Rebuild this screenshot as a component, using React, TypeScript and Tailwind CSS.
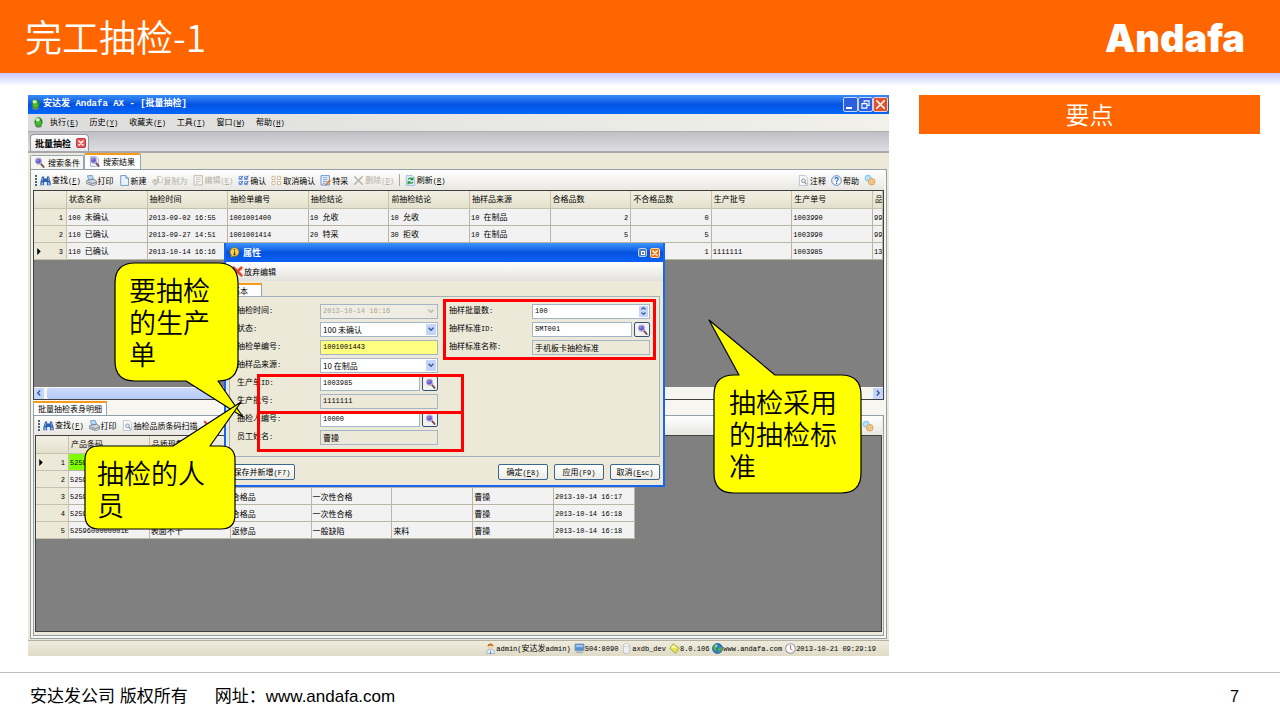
import React from "react";

type IconProps = { className?: string };

const ICON = "size-[11px] shrink-0";

/* Latin runs are set in a narrow monospace beside the Chinese text. */
function T({ children }: { children: string }) {
  const parts = children.match(/[\x20-\x7e]+|[^\x20-\x7e]+/g) ?? [];
  return (
    <span className="whitespace-pre">
      {parts.map((p, i) =>
        /^[\x20-\x7e]+$/.test(p) ? (
          <span key={i} className="font-['Liberation_Mono',monospace] text-[7px]">
            {p}
          </span>
        ) : (
          p
        )
      )}
    </span>
  );
}

function Key({ k }: { k: string }) {
  return (
    <span className="font-['Liberation_Mono',monospace] text-[7px]">
      (<u>{k}</u>)
    </span>
  );
}

function Orb({ className = "h-[11px] w-[9px]" }: IconProps) {
  return (
    <svg viewBox="0 0 16 20" className={className} aria-hidden="true">
      <ellipse cx="8" cy="17" rx="6" ry="2.5" fill="#7d8a7a" />
      <ellipse cx="8" cy="9" rx="7.5" ry="8.5" fill="#2c8a1e" />
      <ellipse cx="8" cy="11" rx="5" ry="5" fill="#4db832" />
      <ellipse cx="6.5" cy="5" rx="4" ry="3" fill="#c9f3b4" />
    </svg>
  );
}

function Lens({ className = ICON, page = false }: IconProps & { page?: boolean }) {
  return (
    <svg viewBox="0 0 16 16" className={className} aria-hidden="true">
      {page && <path d="M2 1h9l3 3v11H2z" fill="#eef4fc" stroke="#7f9cc8" />}
      <path d="M9 9l5 5.5" stroke="#7a4b4b" strokeWidth="2.6" strokeLinecap="round" />
      <circle cx="6.5" cy="6" r="4.4" fill="#6a58c8" stroke="#b9b6d8" strokeWidth="1.6" />
      <circle cx="5.5" cy="5" r="1.6" fill="#9c8ee8" />
    </svg>
  );
}

function Binoculars() {
  return (
    <svg viewBox="0 0 16 16" className={ICON} aria-hidden="true">
      <path d="M3 2h3v3h4V2h3l2.5 9v4H10v-5H6v5H.5v-4z" fill="#2c5fae" />
      <path d="M2 11h2.5v3H2zM11.5 11H14v3h-2.5z" fill="#9cc3f2" />
      <path d="M4 4l-1 5M12 4l1 5" stroke="#8fb6ea" strokeWidth="1.2" />
    </svg>
  );
}

function Printer() {
  return (
    <svg viewBox="0 0 16 16" className={ICON} aria-hidden="true">
      <path d="M2 1l7-.5 2 6-7 1z" fill="#b9d8f8" stroke="#5c88bd" />
      <path d="M1 8l10-2 4.5 3v4L10 15.5 1 12.5z" fill="#d3d8de" stroke="#5b6673" />
      <path d="M3 10.5l6.5 2 5-2" stroke="#5b6673" fill="none" />
      <path d="M8 14l6-2.2 1 1.7-5 2z" fill="#f3f6fa" stroke="#6d7d90" strokeWidth=".7" />
    </svg>
  );
}

function Page() {
  return (
    <svg viewBox="0 0 16 16" className={ICON} aria-hidden="true">
      <path d="M2.5.8h7.5l3.8 4v10.4H2.5z" fill="#e9f2fd" stroke="#5f8bc6" strokeWidth="1.2" />
      <path d="M10 .8v4h3.8" fill="#a9c8ef" stroke="#5f8bc6" />
    </svg>
  );
}

function CopyAs() {
  return (
    <svg viewBox="0 0 16 16" className={ICON} aria-hidden="true">
      <path d="M8 2h5l2.5 2.5V11H8z" fill="#f4f3ee" stroke="#b9b6aa" />
      <path d="M.5 9l4-3v2h3l2-3v5l-2.5 3h-2V15z" fill="#d8d5ca" stroke="#b0ada2" />
    </svg>
  );
}

function Sheet({ color, pen }: { color: string; pen?: boolean }) {
  return (
    <svg viewBox="0 0 16 16" className={ICON} aria-hidden="true">
      <path d="M1.5 1h12v13.5h-12z" fill="#fbfcfe" stroke={color} strokeWidth="1.3" />
      <path d="M4 4h7M4 6.8h7M4 9.6h7M4 12h4" stroke={color} strokeWidth="1.1" />
      {pen && <path d="M15.5 8.5L10 14l-2 1.5.5-2.5L14 7z" fill="#ff7a1a" stroke="#c8540a" strokeWidth=".6" />}
    </svg>
  );
}

function Blocks({ color, ticks }: { color: string; ticks?: boolean }) {
  return (
    <svg viewBox="0 0 16 16" className={ICON} aria-hidden="true">
      <path d="M1.5 2h4.5v4.5H1.5zM9.5 2H14v4.5H9.5zM1.5 9.5H6V14H1.5zM9.5 9.5H14V14H9.5z" fill="#fff" stroke={color} strokeWidth="1.4" />
      {ticks && <path d="M2 4l1.5 2L7 1M10 4l1.5 2L15 1M2 11.5l1.5 2L7 8.5M10 11.5l1.5 2 3.5-5" fill="none" stroke="#2656c0" strokeWidth="1.2" />}
    </svg>
  );
}

function Cross({ color, className = ICON, w = 2 }: IconProps & { color: string; w?: number }) {
  return (
    <svg viewBox="0 0 16 16" className={className} aria-hidden="true">
      <path d="M2.5 2.5l11 11M13.5 2.5l-11 11" stroke={color} strokeWidth={w} strokeLinecap="round" />
    </svg>
  );
}

function Refresh() {
  return (
    <svg viewBox="0 0 16 16" className={ICON} aria-hidden="true">
      <path d="M2 .8h8.5L14 4.5v10.7H2z" fill="#e3eefb" stroke="#86a9d6" />
      <path d="M4.5 6.5C6 4 9 4 10.5 6M11.5 3.5v3.3H8M11.5 10C10 12.5 7 12.5 5.5 10.8M4.5 13.5V10H8" fill="none" stroke="#199432" strokeWidth="1.7" />
    </svg>
  );
}

function PageLens() {
  return (
    <svg viewBox="0 0 16 16" className={ICON} aria-hidden="true">
      <path d="M2 .8h8.5L14 4.5v10.7H2z" fill="#f8f9fb" stroke="#a9b2bd" />
      <circle cx="8" cy="8.5" r="2.8" fill="#dce9f7" stroke="#7f8c9a" strokeWidth="1.2" />
      <path d="M10 10.8l2.5 2.7" stroke="#7f8c9a" strokeWidth="1.6" />
    </svg>
  );
}

function Help() {
  return (
    <svg viewBox="0 0 16 16" className={ICON} aria-hidden="true">
      <circle cx="8" cy="8" r="7" fill="#f2f7fd" stroke="#4c7dbd" strokeWidth="1.3" />
      <path d="M5.7 6.2C5.7 3 10.5 3 10.5 6c0 1.8-2.4 2-2.4 4M8.1 11.3v1.7" fill="none" stroke="#2f62a8" strokeWidth="1.6" />
    </svg>
  );
}

function Gears() {
  return (
    <svg viewBox="0 0 16 16" className="size-3 shrink-0" aria-hidden="true">
      <circle cx="5.5" cy="5.5" r="4.6" fill="#8fcbee" />
      <circle cx="5.5" cy="5.5" r="3" fill="#b9e0f5" />
      <circle cx="10.3" cy="10.3" r="4.4" fill="#f5cf94" stroke="#d99b4a" strokeWidth="1.2" />
      <circle cx="10.3" cy="10.3" r="1.5" fill="#fff" stroke="#c98a3c" strokeWidth=".9" />
    </svg>
  );
}

function Person() {
  return (
    <svg viewBox="0 0 16 16" className={ICON} aria-hidden="true">
      <path d="M2.5 15.5c0-5 2.500-6.500 5.500-6.500s5.500 1.500 5.500 6.500z" fill="#e8f0fb" stroke="#7f9ccc" />
      <path d="M8 9.500l-1 6h2z" fill="#3565b8" />
      <circle cx="8" cy="5" r="3.800" fill="#f8d2a4" />
      <path d="M3.800 5C3.300-.5 12.700-.5 12.200 5 10 2.800 6.500 3.500 3.800 5z" fill="#c46a1c" />
    </svg>
  );
}

function Monitor() {
  return (
    <svg viewBox="0 0 16 16" className={ICON} aria-hidden="true">
      <path d="M1.5 1.5h13v9.5h-13z" fill="#4d93dc" stroke="#8896a8" strokeWidth="1.3" />
      <path d="M3 3h10v3H3z" fill="#9cc8f4" />
      <path d="M4 12h8l2 3H2z" fill="#aab4c2" />
    </svg>
  );
}

function Cylinder() {
  return (
    <svg viewBox="0 0 16 16" className={ICON} aria-hidden="true">
      <path d="M3.5 3v10c0 3 9 3 9 0V3z" fill="#eceef1" stroke="#aeb3ba" />
      <ellipse cx="8" cy="3" rx="4.5" ry="2" fill="#fff" stroke="#aeb3ba" />
    </svg>
  );
}

function Diamond() {
  return (
    <svg viewBox="0 0 16 16" className={ICON} aria-hidden="true">
      <path d="M6 1l9 6.5L9.5 15 1 8z" fill="#e3e04e" stroke="#9a9a26" />
      <path d="M6 3l5 4-3 1-5-1z" fill="#f8f6b0" />
    </svg>
  );
}

function Globe() {
  return (
    <svg viewBox="0 0 16 16" className={ICON} aria-hidden="true">
      <circle cx="8" cy="8" r="7.3" fill="#2b79d0" stroke="#1b4c8e" />
      <path d="M3 3c3-2 5-1 5 1S5 7 6 9s-2 4-3 2-2-5 0-8zM10 7c2-2 4-1 4.5 1s-2 5-4 5-2-4-.5-6z" fill="#48b344" />
      <circle cx="6" cy="4.5" r="1.8" fill="#bfe6fa" opacity=".7" />
    </svg>
  );
}

function Clock() {
  return (
    <svg viewBox="0 0 16 16" className={ICON} aria-hidden="true">
      <circle cx="8" cy="8" r="7" fill="#fff" stroke="#9298a3" strokeWidth="1.6" />
      <path d="M8 3v5.5l3 2" fill="none" stroke="#c04a4a" strokeWidth="1.3" />
    </svg>
  );
}

function Info() {
  return (
    <svg viewBox="0 0 16 16" className={ICON} aria-hidden="true">
      <path d="M8 .8a6.5 6.5 0 1 1-2 12.7L2.500 15l.8-3.200A6.500 6.500 0 0 1 8 .8z" fill="#ffcf38" stroke="#8a6a10" />
      <path d="M8 3v2M8 6.500V11M6.500 11h3" stroke="#33415c" strokeWidth="1.8" />
    </svg>
  );
}

function Chevron({ dir, className = "size-[6px]", color = "#3c5a9a" }: IconProps & { dir: "down" | "up" | "left" | "right"; color?: string }) {
  const d = {
    down: "M1 3l4 4 4-4",
    up: "M1 7l4-4 4 4",
    left: "M7 1L3 5l4 4",
    right: "M3 1l4 4-4 4",
  }[dir];
  return (
    <svg viewBox="0 0 10 10" className={className} aria-hidden="true">
      <path d={d} fill="none" stroke={color} strokeWidth="2.4" />
    </svg>
  );
}

type Tool = { icon: React.ReactNode; label?: string; k?: string; off?: boolean };

function ToolButton({ icon, label, k, off }: Tool) {
  return (
    <button
      type="button"
      disabled={off}
      aria-label={label ?? "设置"}
      className={`flex shrink-0 items-center gap-px whitespace-nowrap ${off ? "text-[#b3b0a4]" : "text-black"}`}
    >
      {icon}
      {label && (
        <span>
          {label}
          {k && <Key k={k} />}
        </span>
      )}
    </button>
  );
}

function Grip() {
  return (
    <svg viewBox="0 0 2 11" className="-mr-[2px] h-[11px] w-[2px] shrink-0" aria-hidden="true">
      <path d="M0 0h2v2H0zM0 3h2v2H0zM0 6h2v2H0zM0 9h2v2H0z" fill="#4d6185" />
    </svg>
  );
}

const TOOLS: Tool[] = [
  { icon: <Binoculars />, label: "查找", k: "F" },
  { icon: <Printer />, label: "打印" },
  { icon: <Page />, label: "新建" },
  { icon: <CopyAs />, label: "复制为", off: true },
  { icon: <Sheet color="#b3b0a4" />, label: "编辑", k: "E", off: true },
  { icon: <Blocks color="#6f97dc" ticks />, label: "确认" },
  { icon: <Blocks color="#cdb79a" />, label: "取消确认" },
  { icon: <Sheet color="#4f82cc" pen />, label: "特采" },
  { icon: <Cross color="#b3b0a4" />, label: "删除", k: "D", off: true },
];

const HEADERS = ["状态名称", "抽检时间", "抽检单编号", "抽检结论", "前抽检结论", "抽样品来源", "合格品数", "不合格品数", "生产批号", "生产单号", "品"];
const ROWS = [
  ["100 未确认", "2013-09-02 16:55", "1001001400", "10 允收", "10 允收", "10 在制品", "2", "0", "", "1003990", "99"],
  ["110 已确认", "2013-09-27 14:51", "1001001414", "20 特采", "30 拒收", "10 在制品", "5", "5", "", "1003990", "99"],
  ["110 已确认", "2013-10-14 16:16", "", "", "", "", "", "1", "1111111", "1003985", "13"],
];

const DETAIL_HEADERS = ["产品条码", "品质现象", "", "", "", "", ""];
const DETAIL_ROWS = [
  ["52596000000018", "", "", "", "", "", ""],
  ["52596000000019", "", "", "", "", "", ""],
  ["5259600000001A", "", "合格品", "一次性合格", "", "曹操", "2013-10-14 16:17"],
  ["5259600000001B", "", "合格品", "一次性合格", "", "曹操", "2013-10-14 16:18"],
  ["5259600000001E", "表面不干", "返修品", "一般缺陷", "来料", "曹操", "2013-10-14 16:18"],
];

function DataTable({
  headers,
  rows,
  current,
  numeric = [],
  narrowLast,
  markFirst,
  className,
}: {
  headers: string[];
  rows: string[][];
  current: number;
  numeric?: number[];
  narrowLast?: boolean;
  markFirst?: boolean;
  className: string;
}) {
  return (
    <table className={`table-fixed border-separate border-spacing-0 ${className}`}>
      <thead>
        <tr className="h-[18px] bg-linear-to-b from-[#f1efe3] via-[#ece9d8] to-[#e2decb]">
          <th className="w-[33px] border-r border-b border-[#c5c2b0] p-0" aria-label="行号" />
          {headers.map((h, i) => (
            <th
              key={i}
              className={`overflow-hidden border-r border-b border-[#c5c2b0] p-0 pb-[2px] pl-[2px] text-left font-normal whitespace-nowrap ${
                narrowLast && i === headers.length - 1 ? "w-[10px]" : ""
              }`}
            >
              {h}
            </th>
          ))}
        </tr>
      </thead>
      <tbody>
        {rows.map((r, ri) => (
          <tr key={ri} className="h-[17px]">
            <th className="border-r border-b border-[#c5c2b0] bg-[#ece9d8] p-0 px-[3px] font-normal">
              <span className="flex items-center justify-between">
                <svg viewBox="0 0 4 8" className="h-[7px] w-[4px]" aria-hidden="true">
                  {ri === current && <path d="M0 0l4 4-4 4z" fill="#000" />}
                </svg>
                <T>{String(ri + 1)}</T>
              </span>
            </th>
            {r.map((c, ci) => (
              <td
                key={ci}
                className={`overflow-hidden border-r border-b border-[#b9b6a6] p-0 whitespace-nowrap ${
                  numeric.includes(ci) ? "pr-[2px] text-right" : "pl-px text-left"
                } ${markFirst && ri === 0 && ci === 0 ? "bg-[#80ff00]" : "bg-[#f2f2f2]"}`}
              >
                <T>{c}</T>
              </td>
            ))}
          </tr>
        ))}
      </tbody>
    </table>
  );
}

const FIELD = "h-[15px] w-full rounded-none border border-[#a5b5c9] px-[2px] outline-none";
const MONO = "font-['Liberation_Mono',monospace] text-[7px]";

function Row({ id, label, children }: { id: string; label: string; children: React.ReactNode }) {
  return (
    <div className="flex h-[18px] items-center">
      <label htmlFor={id} className="w-[83px] shrink-0 pb-px">
        <T>{label}</T>
      </label>
      <div className="relative flex w-[118px] items-center gap-[2px]">{children}</div>
    </div>
  );
}

function Drop({ id, value, disabled }: { id: string; value: string; disabled?: boolean }) {
  return (
    <>
      <select
        id={id}
        disabled={disabled}
        defaultValue={value}
        className={`${FIELD} appearance-none ${disabled ? `${MONO} bg-[#f0eee2] text-[#a8a595] opacity-100` : "bg-white text-black"}`}
      >
        <option>{value}</option>
      </select>
      <span
        className={`pointer-events-none absolute inset-y-[2px] right-[2px] flex w-[10px] items-center justify-center ${
          disabled ? "bg-[#ece9de]" : "bg-[#c4d5fa]"
        }`}
      >
        <Chevron dir="down" color={disabled ? "#bdbaa9" : "#3c5a9a"} />
      </span>
    </>
  );
}

function Lookup({ id, value }: { id: string; value: string }) {
  return (
    <>
      <input id={id} defaultValue={value} className={`${FIELD} ${MONO} min-w-0 flex-1 bg-white`} />
      <button type="button" aria-label="选择" className="flex h-[15px] w-4 shrink-0 items-center justify-center rounded-xs border border-[#31527d] bg-[#f3f2ee]">
        <Lens />
      </button>
    </>
  );
}

function PushButton({ label, k, wide }: { label: string; k: React.ReactNode; wide?: boolean }) {
  return (
    <button
      type="button"
      className={`h-4 rounded-xs border border-[#3d6690] bg-linear-to-b from-white to-[#ecebe4] whitespace-nowrap ${wide ? "w-[66px]" : "w-[50px]"}`}
    >
      {label}
      <span className={MONO}>({k})</span>
    </button>
  );
}

function PropertiesDialog() {
  return (
    <section aria-label="属性" className="absolute top-[148px] left-[196px] flex w-[441px] flex-col border-x-2 border-b-2 border-[#1666f2] bg-[#ece9d8]">
      <div className="flex h-[19px] items-center gap-[3px] bg-linear-to-b from-[#3f94fb] via-[#0552e0] to-[#0862f4] px-[3px] text-[9px] font-bold text-white">
        <Info />
        <h2 className="flex-1">属性</h2>
        <button type="button" aria-label="还原" className="flex size-[9px] items-center justify-center rounded-xs border border-[#b9cdf0] bg-[#5580b5]">
          <span className="size-[4px] border border-white" />
        </button>
        <button type="button" aria-label="关闭" className="flex size-[10px] items-center justify-center rounded-xs border border-[#ffd9a8] bg-[#e8740c]">
          <Cross color="#fff" className="size-[6px]" w={4} />
        </button>
      </div>
      <div className="flex h-[19px] items-center bg-linear-to-b from-white to-[#e3e2dd] pl-[6px]">
        <ToolButton icon={<Cross color="#e2492f" w={4} />} label="放弃编辑" />
      </div>
      <div className="flex flex-col px-[3px] pt-[2px]">
        <div className="flex h-[13px]">
          <button type="button" className="w-[33px] border-x border-t-2 border-x-[#8fa3b5] border-t-[#f59b18] bg-white pl-[2px] text-left leading-[11px]">
            基本
          </button>
        </div>
        <div className="flex gap-[11px] border border-[#a3b1bb] pt-[5px] pb-[10px] pl-[7px]">
          <div>
            <Row id="f1" label="抽检时间:">
              <Drop id="f1" value="2013-10-14 16:16" disabled />
            </Row>
            <Row id="f2" label="状态:">
              <Drop id="f2" value="100 未确认" />
            </Row>
            <Row id="f3" label="抽检单编号:">
              <input id="f3" defaultValue="1001001443" className={`${FIELD} ${MONO} bg-[#ffff80]`} />
            </Row>
            <Row id="f4" label="抽样品来源:">
              <Drop id="f4" value="10 在制品" />
            </Row>
            <Row id="f5" label="生产单ID:">
              <Lookup id="f5" value="1003985" />
            </Row>
            <Row id="f6" label="生产批号:">
              <input id="f6" readOnly defaultValue="1111111" className={`${FIELD} ${MONO} bg-[#ece9d8]`} />
            </Row>
            <Row id="f7" label="抽检人编号:">
              <Lookup id="f7" value="10000" />
            </Row>
            <Row id="f8" label="员工姓名:">
              <input id="f8" readOnly defaultValue="曹操" className={`${FIELD} bg-[#ece9d8]`} />
            </Row>
          </div>
          <div>
            <Row id="f9" label="抽样批量数:">
              <input id="f9" defaultValue="100" className={`${FIELD} ${MONO} bg-white`} />
              <span className="pointer-events-none absolute inset-y-[2px] right-[2px] flex w-[9px] flex-col items-center justify-center bg-[#c4d5fa]">
                <Chevron dir="up" className="size-[5px]" />
                <Chevron dir="down" className="size-[5px]" />
              </span>
            </Row>
            <Row id="f10" label="抽样标准ID:">
              <Lookup id="f10" value="SMT001" />
            </Row>
            <Row id="f11" label="抽样标准名称:">
              <input id="f11" readOnly defaultValue="手机板卡抽检标准" className={`${FIELD} bg-[#ece9d8]`} />
            </Row>
          </div>
        </div>
      </div>
      <div className="flex items-start gap-[6px] px-[3px] pt-[7px] pb-[5px]">
        <div className="flex-1">
          <PushButton label="保存并新增" k="F7" wide />
        </div>
        <PushButton label="确定" k={<><u>F</u>8</>} />
        <PushButton label="应用" k="F9" />
        <PushButton label="取消" k={<><u>E</u>sc</>} />
      </div>
    </section>
  );
}

function Callout({
  place,
  text,
  textPlace,
  width,
  height,
  path,
}: {
  place: string;
  text: string[];
  textPlace: string;
  width: number;
  height: number;
  path: string;
}) {
  return (
    <div className={`absolute ${place}`}>
      <svg width={width} height={height} viewBox={`0 0 ${width} ${height}`} className="absolute top-0 left-0 overflow-visible" aria-hidden="true">
        <path d={path} fill="#ffff00" stroke="#000" strokeWidth="1.2" strokeLinejoin="round" />
      </svg>
      <p className={`relative text-[27px] leading-8 font-[350] whitespace-nowrap text-black ${textPlace}`}>
        {text.map((t) => (
          <span key={t} className="block">
            {t}
          </span>
        ))}
      </p>
    </div>
  );
}

function Status({ icon, children }: { icon: React.ReactNode; children: string }) {
  return (
    <span className="flex items-center">
      {icon}
      <T>{children}</T>
    </span>
  );
}

const MENUS = [
  ["执行", "E"],
  ["历史", "Y"],
  ["收藏夹", "F"],
  ["工具", "T"],
  ["窗口", "W"],
  ["帮助", "H"],
];

function AppWindow() {
  return (
    <div className="relative flex flex-col self-start bg-[#ece9d8] text-[8px] leading-[11px] text-black">
      <div className="flex h-[19px] items-center gap-[3px] bg-linear-to-b from-[#3a8cf6] via-[#0452e2] to-[#0668fb] pr-px pl-[3px]">
        <Orb />
        <span className="flex-1 font-['Liberation_Mono','Noto_Sans_CJK_SC',monospace] text-[9px] font-bold whitespace-pre text-white">
          安达发 Andafa AX - [批量抽检]
        </span>
        <div className="flex">
          <button type="button" aria-label="最小化" className="flex size-[15px] items-end rounded-xs border border-[#c5d6f5] bg-[#2c5fe0] p-[2px]">
            <span className="h-[2px] w-[6px] bg-white" />
          </button>
          <button type="button" aria-label="还原" className="flex size-[15px] items-center justify-center rounded-xs border border-[#c5d6f5] bg-[#2c5fe0]">
            <svg viewBox="0 0 10 10" className="size-[9px]" aria-hidden="true">
              <path d="M3.5 3V1h5.5v5H7M1 4h5.5v5H1z" fill="none" stroke="#fff" strokeWidth="1.2" />
            </svg>
          </button>
          <button type="button" aria-label="关闭" className="flex size-[15px] items-center justify-center rounded-xs border border-[#f4cfc4] bg-[#e0532c]">
            <Cross color="#fff" className="size-[11px]" w={2.4} />
          </button>
        </div>
      </div>

      <nav className="flex h-[17px] items-center gap-[11px] bg-linear-to-r from-[#dcdcdc] to-[#f1f1ea] pl-[6px]">
        <Orb />
        {MENUS.map(([m, k], i) => (
          <button type="button" key={m} className={`whitespace-nowrap ${i === 0 ? "-ml-[4px]" : ""}`}>
            {m}
            <Key k={k} />
          </button>
        ))}
      </nav>

      <div className="flex h-[22px] items-end border-t border-b-2 border-t-[#aeaeb2] border-b-[#a7a7ac] bg-linear-to-b from-[#bfbfc4] to-[#dddde3] pl-[2px]">
        <button type="button" className="flex h-[17px] items-center gap-[5px] rounded-t-sm border border-b-0 border-[#98989e] bg-linear-to-b from-white to-[#e6e6ea] pr-[2px] pl-[4px] text-[9px] font-bold">
          批量抽检
          <span className="flex size-[10px] items-center justify-center rounded-xs border border-[#c0393f] bg-[#e2565c]">
            <Cross color="#fff" className="size-[6px]" w={4} />
          </span>
        </button>
      </div>

      <div className="flex h-4 items-end pl-[2px]">
        <button type="button" className="flex h-[14px] items-center gap-[3px] rounded-t-xs border border-b-0 border-[#91a7b4] bg-[#f6f5ef] px-[3px]">
          <Lens />
          搜索条件
        </button>
        <button type="button" className="flex h-4 items-center gap-[3px] rounded-t-xs border-x border-t-2 border-x-[#91a7b4] border-t-[#f59b18] bg-white pr-[5px] pb-[2px] pl-[4px]">
          <Lens page />
          搜索结果
        </button>
      </div>

      <div className="mx-[2px] flex flex-col border border-[#91a0ab] bg-[#f7f6f1] px-[2px] pb-[2px]">
        <div className="flex h-5 items-center gap-[5px] bg-linear-to-b from-white to-[#e8e7e2] pr-[8px] pl-[2px]">
          <Grip />
          {TOOLS.map((t) => (
            <ToolButton key={t.label} {...t} />
          ))}
          <span className="h-3 w-px bg-[#aaa899]" />
          <ToolButton icon={<Refresh />} label="刷新" k="R" />
          <span className="flex-1" />
          <ToolButton icon={<PageLens />} label="注释" />
          <ToolButton icon={<Help />} label="帮助" />
          <ToolButton icon={<Gears />} />
        </div>

        <div className="flex flex-col border border-[#404040]">
          <div className="h-[196px] overflow-hidden bg-[#808080]">
            <DataTable headers={HEADERS} rows={ROWS} current={2} numeric={[6, 7]} narrowLast className="w-full" />
          </div>
          <div className="flex h-3 items-center gap-[3px] bg-[#f6f5ef]">
            <span className="flex h-[11px] w-[10px] items-center justify-center bg-[#c4d5fa]">
              <Chevron dir="left" />
            </span>
            <span className="h-[11px] w-1/2 rounded-xs bg-linear-to-b from-[#cbdafc] to-[#b5c9f7]" />
            <span className="flex-1" />
            <span className="flex h-[11px] w-[10px] items-center justify-center bg-[#c4d5fa]">
              <Chevron dir="right" />
            </span>
          </div>
        </div>

        <div className="flex h-[15px] items-end">
          <button type="button" className="h-[14px] border-x border-t-2 border-x-[#91a7b4] border-t-[#f59b18] bg-white px-[4px] pb-px">
            批量抽检表身明细
          </button>
        </div>

        <div className="flex flex-col border border-[#91a0ab] bg-[#ece9d8] px-px pb-[3px]">
          <div className="flex h-[19px] items-center gap-[5px] bg-linear-to-b from-white to-[#e8e7e2] pr-[8px] pl-[3px]">
            <Grip />
            <ToolButton icon={<Binoculars />} label="查找" k="F" />
            <ToolButton icon={<Printer />} label="打印" />
            <ToolButton icon={<PageLens />} label="抽检品质条码扫描" />
            <Cross color="#e2492f" w={3} />
            <span className="flex-1" />
            <ToolButton icon={<Gears />} />
          </div>
          <div className="h-[197px] overflow-hidden border border-[#404040] bg-[#808080]">
            <DataTable headers={DETAIL_HEADERS} rows={DETAIL_ROWS} current={0} markFirst className="w-[599px]" />
          </div>
        </div>
      </div>

      <div className="mt-px flex h-4 items-center justify-end gap-[3px] border-t border-[#b5b2a0] bg-linear-to-b from-[#efecdf] to-[#dfdbc6] pr-[13px]">
        <Status icon={<Person />}>admin(安达发admin)</Status>
        <Status icon={<Monitor />}>S04:8090</Status>
        <Status icon={<Cylinder />}>axdb_dev</Status>
        <Status icon={<Diamond />}>8.0.106</Status>
        <Status icon={<Globe />}>www.andafa.com</Status>
        <Status icon={<Clock />}>2013-10-21 09:29:19</Status>
      </div>

      <PropertiesDialog />

      <span className="absolute top-[204px] left-[415px] h-[61px] w-[213px] border-3 border-[#ff0000]" />
      <span className="absolute top-[279px] left-[229px] h-[40px] w-[207px] border-3 border-[#ff0000]" />
      <span className="absolute top-[316px] left-[229px] h-[41px] w-[207px] border-3 border-[#ff0000]" />

      <Callout
        place="top-[168px] left-[87px]"
        textPlace="pt-[11px] pl-[14px]"
        text={["要抽检", "的生产", "单"]}
        width={123}
        height={118}
        path="M20 0H103Q123 0 123 20V98Q123 118 103 118L128 154L71 118H20Q0 118 0 98V20Q0 0 20 0Z"
      />
      <Callout
        place="top-[351px] left-[57px]"
        textPlace="pt-[11px] pl-[12px]"
        text={["抽检的人", "员"]}
        width={150}
        height={83}
        path="M14 0H88L156 -44L125 0H136Q150 0 150 14V69Q150 83 136 83H14Q0 83 0 69V14Q0 0 14 0Z"
      />
      <Callout
        place="top-[280px] left-[686px]"
        textPlace="pt-[11px] pl-[15px]"
        text={["抽检采用", "的抽检标", "准"]}
        width={147}
        height={118}
        path="M20 0H25L-5 -55L61 0H127Q147 0 147 20V98Q147 118 127 118H20Q0 118 0 98V20Q0 0 20 0Z"
      />
    </div>
  );
}

export default function App() {
  return (
    <div className="flex min-h-screen flex-col bg-white font-['Liberation_Sans','Noto_Sans_CJK_SC',sans-serif]">
      <header className="flex h-[73px] items-center justify-between bg-[#ff6600] pr-[35px] pb-[2px] pl-[25px] text-white">
        <h1 className="font-['Noto_Sans_CJK_SC',sans-serif] text-[37px] leading-[44px] font-[350]">完工抽检-1</h1>
        <span className="pt-[4px] font-['Inter',sans-serif] text-[38px] leading-[44px] font-black">Andafa</span>
      </header>
      <div className="h-[13px] bg-linear-to-b from-[#c8c8ff] to-white" />
      <main className="grid flex-1 grid-cols-[minmax(0,861fr)_minmax(0,341fr)] gap-x-[30px] pt-[9px] pr-[20px] pb-4 pl-[28px] font-['Noto_Sans_CJK_SC',sans-serif]">
        <AppWindow />
        <aside>
          <h2 className="bg-[#ff6600] pb-px text-center text-[24px] leading-[38px] font-[350] text-white">要点</h2>
        </aside>
      </main>
      <footer className="flex h-[48px] items-center justify-between border-t border-[#bfbfbf] pr-[41px] pl-[30px] text-[17px] leading-6 text-black">
        <span className="flex gap-[27px]">
          <span>安达发公司 版权所有</span>
          <span>
            网址：<a href="http://www.andafa.com">www.andafa.com</a>
          </span>
        </span>
        <span className="text-[16px]">7</span>
      </footer>
    </div>
  );
}
